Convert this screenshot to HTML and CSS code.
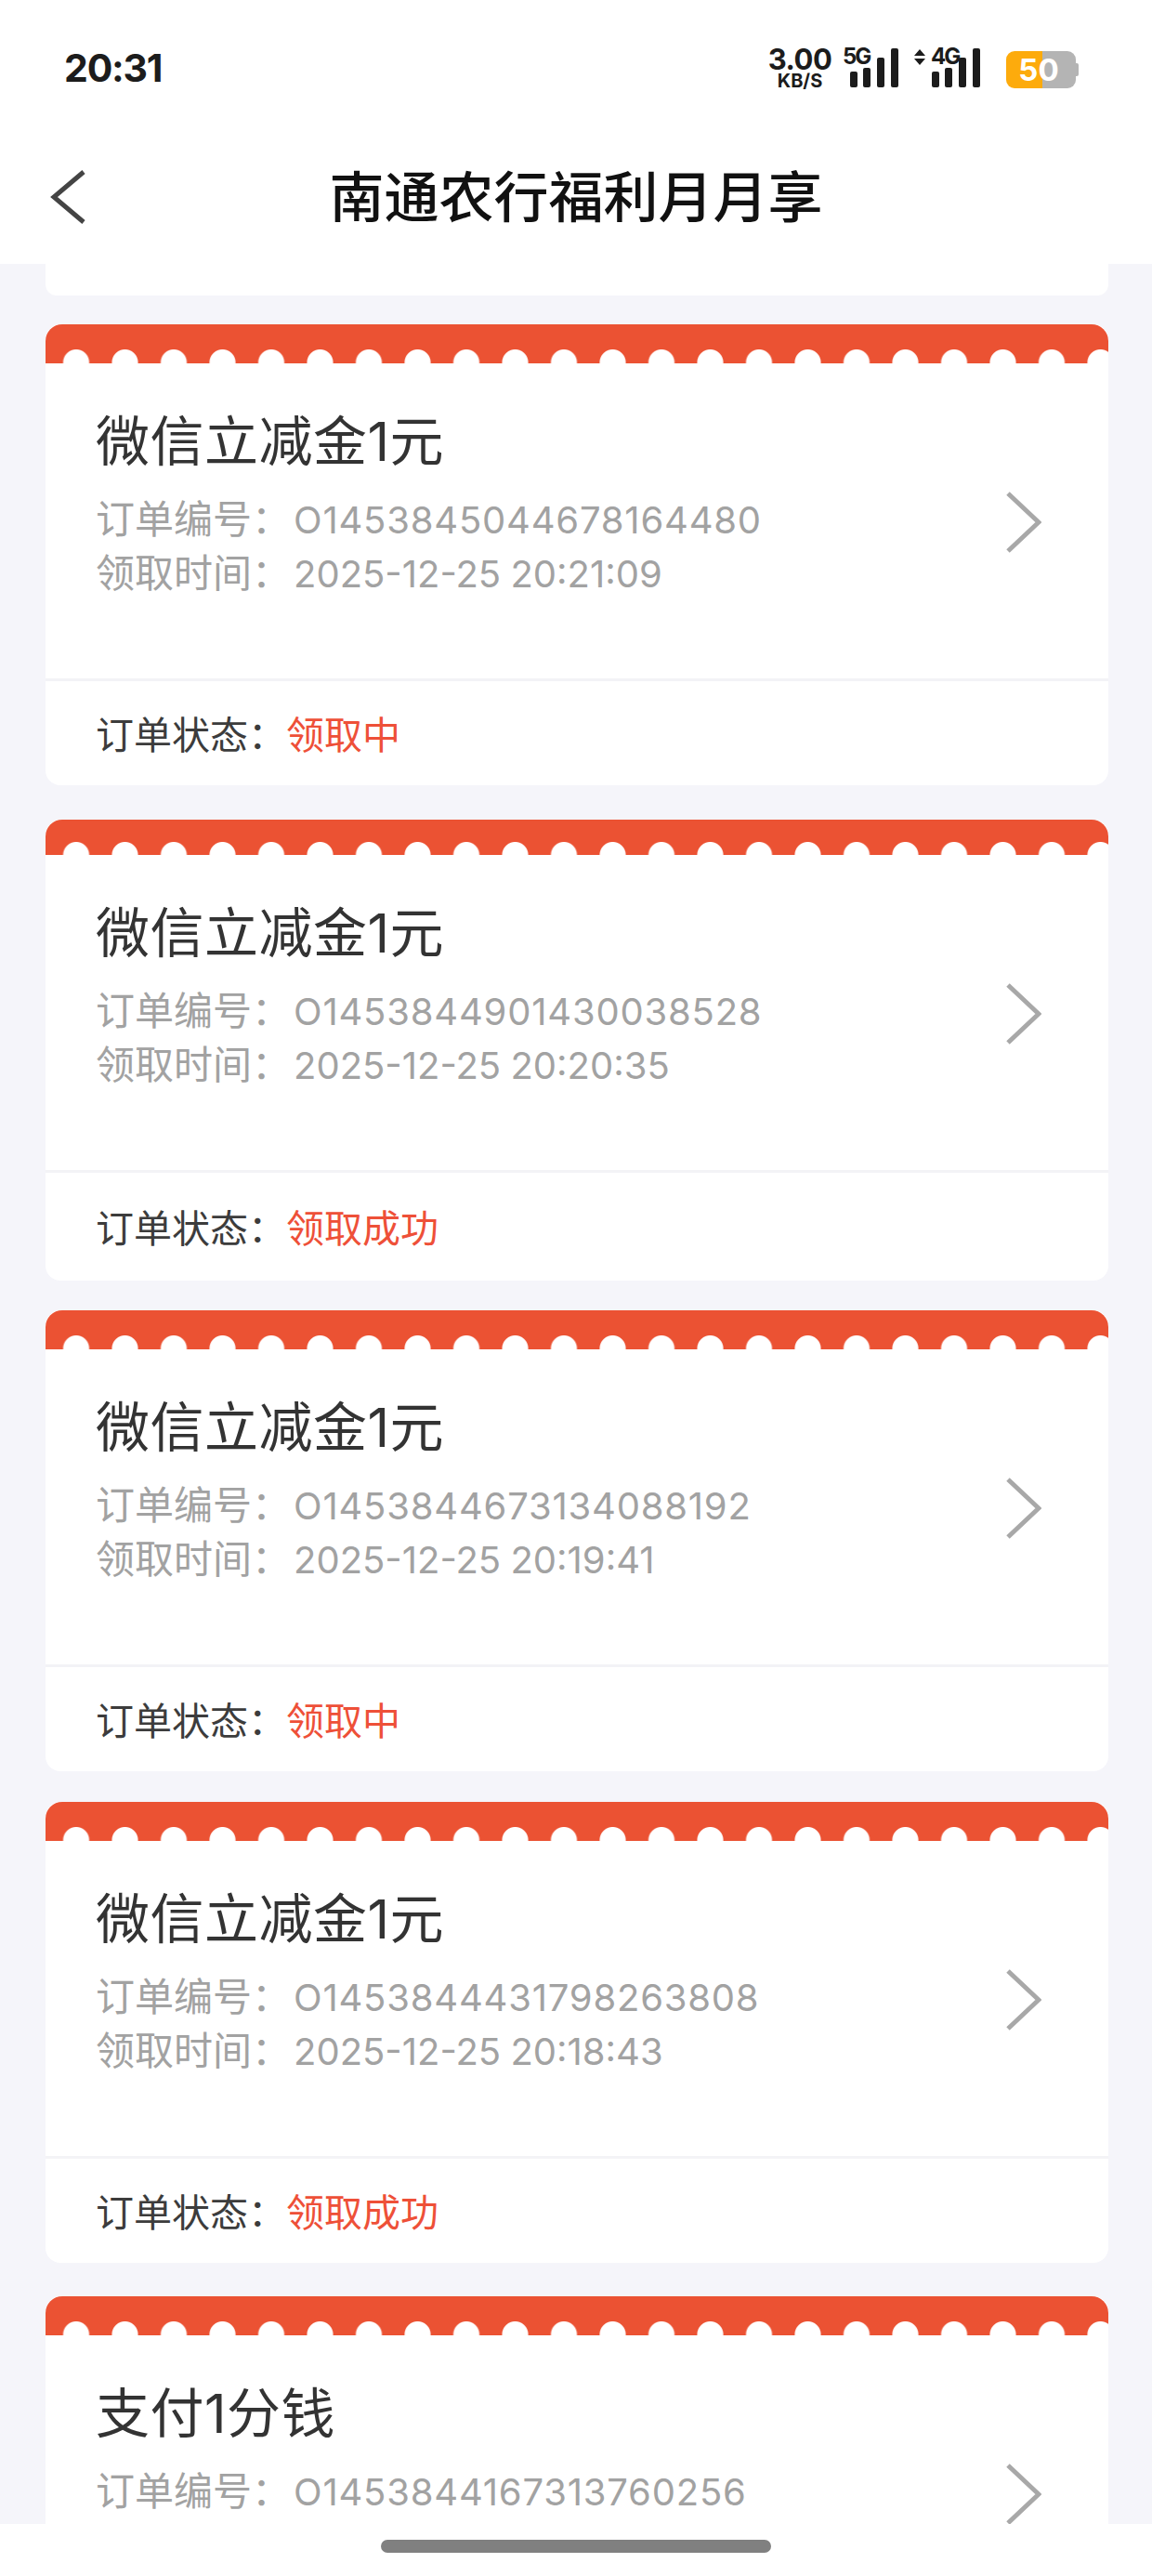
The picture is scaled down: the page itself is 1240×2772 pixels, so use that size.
FILE: index.html
```html
<!DOCTYPE html>
<html lang="zh-CN">
<head>
  <meta charset="UTF-8">
  <title>南通农行福利月月享</title>
  <link rel="stylesheet" href="styles.css">
</head>
<body>
  <div class="page">
    <div class="status-bar">
      <span class="time">20:31</span>
      <div class="status-icons">
        <div class="speed"><span class="speed-num">3.00</span><span class="speed-unit">KB/S</span></div>
        <div class="signal">
          <span class="net">5G</span>
          <svg class="bars" width="52" height="42" viewBox="0 0 52 42"><rect x="0" y="25" width="8" height="17" rx="2"/><rect x="14" y="21" width="8" height="21" rx="2"/><rect x="29" y="10" width="8" height="32" rx="2"/><rect x="44" y="0" width="8" height="42" rx="2"/></svg>
        </div>
        <div class="signal signal-4g">
          <svg class="arrows" width="12" height="17" viewBox="0 0 12 17"><path d="M6 0l6 7H0zM6 17L0 10h12z"/></svg>
          <span class="net">4G</span>
          <svg class="bars" width="52" height="42" viewBox="0 0 52 42"><rect x="0" y="25" width="8" height="17" rx="2"/><rect x="14" y="21" width="8" height="21" rx="2"/><rect x="29" y="10" width="8" height="32" rx="2"/><rect x="44" y="0" width="8" height="42" rx="2"/></svg>
        </div>
        <div class="battery"><span class="battery-num">50</span></div>
      </div>
    </div>

    <div class="nav-bar">
      <svg class="back" width="38" height="58" viewBox="0 0 38 58"><path d="M36 2L4 29l32 27" fill="none" stroke="#444" stroke-width="5"/></svg>
      <h1 class="nav-title">南通农行福利月月享</h1>
    </div>

    <div class="list">
      <div class="card-end"></div>

      <div class="card card-first">
        <div class="card-top"></div>
        <div class="card-body">
          <div class="card-info">
            <div class="card-title">微信立减金1元</div>
            <div class="card-line">订单编号：<span class="num">O1453845044678164480</span></div>
            <div class="card-line">领取时间：<span class="num num-time">2025-12-25 20:21:09</span></div>
          </div>
          <svg class="arrow" width="38" height="66" viewBox="0 0 38 66"><path d="M2 2l33 31L2 64" fill="none" stroke="#a8a8a8" stroke-width="5"/></svg>
        </div>
        <div class="card-foot">订单状态：<span class="state">领取中</span></div>
      </div>

      <div class="card card-second">
        <div class="card-top"></div>
        <div class="card-body">
          <div class="card-info">
            <div class="card-title">微信立减金1元</div>
            <div class="card-line">订单编号：<span class="num">O1453844901430038528</span></div>
            <div class="card-line">领取时间：<span class="num num-time">2025-12-25 20:20:35</span></div>
          </div>
          <svg class="arrow" width="38" height="66" viewBox="0 0 38 66"><path d="M2 2l33 31L2 64" fill="none" stroke="#a8a8a8" stroke-width="5"/></svg>
        </div>
        <div class="card-foot">订单状态：<span class="state">领取成功</span></div>
      </div>

      <div class="card card-third">
        <div class="card-top"></div>
        <div class="card-body">
          <div class="card-info">
            <div class="card-title">微信立减金1元</div>
            <div class="card-line">订单编号：<span class="num">O1453844673134088192</span></div>
            <div class="card-line">领取时间：<span class="num num-time">2025-12-25 20:19:41</span></div>
          </div>
          <svg class="arrow" width="38" height="66" viewBox="0 0 38 66"><path d="M2 2l33 31L2 64" fill="none" stroke="#a8a8a8" stroke-width="5"/></svg>
        </div>
        <div class="card-foot">订单状态：<span class="state">领取中</span></div>
      </div>

      <div class="card">
        <div class="card-top"></div>
        <div class="card-body">
          <div class="card-info">
            <div class="card-title">微信立减金1元</div>
            <div class="card-line">订单编号：<span class="num">O1453844431798263808</span></div>
            <div class="card-line">领取时间：<span class="num num-time">2025-12-25 20:18:43</span></div>
          </div>
          <svg class="arrow" width="38" height="66" viewBox="0 0 38 66"><path d="M2 2l33 31L2 64" fill="none" stroke="#a8a8a8" stroke-width="5"/></svg>
        </div>
        <div class="card-foot">订单状态：<span class="state">领取成功</span></div>
      </div>

      <div class="card">
        <div class="card-top"></div>
        <div class="card-body">
          <div class="card-info">
            <div class="card-title">支付1分钱</div>
            <div class="card-line">订单编号：<span class="num">O1453844167313760256</span></div>
          </div>
          <svg class="arrow" width="38" height="66" viewBox="0 0 38 66"><path d="M2 2l33 31L2 64" fill="none" stroke="#a8a8a8" stroke-width="5"/></svg>
        </div>
      </div>
    </div>

    <div class="home-bar"><span class="home-pill"></span></div>
  </div>
</body>
</html>
```

FILE: styles.css
```css
* {
  margin: 0;
  padding: 0;
  box-sizing: border-box;
}

body {
  font-family: "Inter", "Noto Sans CJK SC", sans-serif;
  background-color: #fff;
}

.page {
  width: 1240px;
  height: 2772px;
  display: flex;
  flex-direction: column;
  overflow: hidden;
}

/* status bar */
.status-bar {
  height: 145px;
  flex-shrink: 0;
  display: flex;
  justify-content: space-between;
  padding: 52px 82px 0 69px;
  background-color: #fff;
}

.time {
  font-size: 41px;
  font-weight: 700;
  line-height: 42px;
  letter-spacing: -1.2px;
  color: #1c1c1c;
}

.status-icons {
  display: flex;
  align-items: flex-start;
  color: #1c1c1c;
}

.speed {
  width: 70px;
  margin-top: -2px;
  display: flex;
  flex-direction: column;
  align-items: center;
  font-weight: 700;
}

.speed-num {
  font-size: 31px;
  line-height: 28px;
  letter-spacing: -0.5px;
}

.speed-unit {
  font-size: 20px;
  line-height: 18px;
}

.signal {
  position: relative;
  width: 60px;
  height: 44px;
  margin-left: 11px;
  display: flex;
  justify-content: flex-end;
}

.signal-4g {
  width: 71px;
  margin-left: 17px;
}

.bars {
  fill: #1c1c1c;
}

/* these sit over the top left of the signal bars */
.net {
  position: absolute;
  top: -3px;
  left: 0;
  font-size: 24px;
  line-height: 24px;
  font-weight: 700;
  letter-spacing: -2px;
}

.signal-4g .net {
  left: 18px;
}

.arrows {
  position: absolute;
  top: 1px;
  left: 0;
  fill: #1c1c1c;
}

.battery {
  position: relative;
  width: 75px;
  height: 40px;
  margin: 3px 0 0 28px;
  padding-right: 5px;
  border-radius: 9px;
  background: linear-gradient(90deg, #fdab0c 0, #fdab0c 39px, #b4b4b4 39px);
  display: flex;
  align-items: center;
  justify-content: center;
}

.battery::after {
  content: "";
  position: absolute;
  right: -3px;
  top: 13px;
  width: 3px;
  height: 14px;
  border-radius: 0 2px 2px 0;
  background-color: #b4b4b4;
}

.battery-num {
  font-size: 33px;
  font-weight: 700;
  color: #fff;
}

/* nav */
.nav-bar {
  position: relative;
  height: 139px;
  flex-shrink: 0;
  display: flex;
  align-items: center;
  justify-content: center;
  background-color: #fff;
}

.back {
  position: absolute;
  left: 54px;
  top: 38px;
}

.nav-title {
  font-size: 59px;
  font-weight: 500;
  color: #111;
  line-height: 70px;
  margin-top: -4px;
}

/* list */
.list {
  flex: 1;
  min-height: 0;
  overflow: hidden;
  background-color: #f5f5fa;
  padding: 0 47px 0 49px;
}

.card-end {
  height: 34px;
  background-color: #fff;
  border-radius: 0 0 12px 12px;
  margin-bottom: 31px;
}

.card {
  background-color: #fff;
  border-radius: 16px;
  margin-bottom: 36px;
}

.card-first {
  margin-bottom: 37px;
}

.card-second {
  margin-bottom: 32px;
}

.card-third {
  margin-bottom: 33px;
}

.card-top {
  height: 42px;
  background-color: #eb5233;
  border-radius: 18px 18px 0 0;
  position: relative;
}

.card-second .card-top {
  height: 38px;
}

.card-top::after {
  content: "";
  position: absolute;
  left: 0;
  right: 0;
  bottom: 0;
  height: 15px;
  background: radial-gradient(circle at 26.25px 14px, #fff 13.5px, transparent 14.5px) 6.75px 0 / 52.5px 15px repeat-x;
}

.card-second .card-top::after {
  height: 14px;
}

.card-body {
  height: 342px;
  padding: 49px 72px 0 54px;
  display: flex;
  justify-content: space-between;
  border-bottom: 3px solid #f3f3f6;
}

.card-title {
  font-size: 58px;
  line-height: 70px;
  letter-spacing: 0.5px;
  color: #333;
  margin-bottom: 20px;
}

.card-line {
  font-size: 42px;
  line-height: 57px;
  color: #a2a2a2;
}

.num {
  font-size: 40px;
  letter-spacing: 0.8px;
  margin-left: 3px;
}

.num-time {
  letter-spacing: 0;
  word-spacing: -1px;
}

.arrow {
  margin-top: 89px;
  flex-shrink: 0;
}

.card-foot {
  height: 112px;
  padding: 0 0 3px 54px;
  display: flex;
  align-items: center;
  font-size: 41px;
  color: #3c3c3c;
}

.card-second .card-foot {
  height: 116px;
}

.state {
  color: #ee5038;
}

/* bottom */
.home-bar {
  height: 56px;
  flex-shrink: 0;
  background-color: #fff;
  display: flex;
  justify-content: center;
  padding-top: 17px;
}

.home-pill {
  width: 420px;
  height: 14px;
  border-radius: 7px;
  background-color: #808080;
}
```
